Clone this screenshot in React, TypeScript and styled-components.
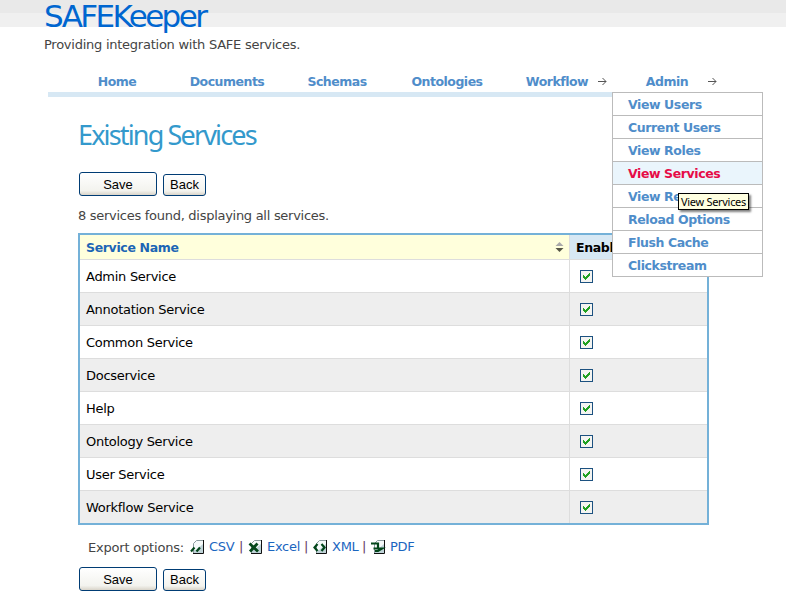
import React from 'react';
import styled, { createGlobalStyle } from 'styled-components';

const GlobalStyle = createGlobalStyle`
  * { box-sizing: border-box; }
  body {
    margin: 0;
    background: #fff;
    font-family: 'DejaVu Sans', sans-serif;
    font-size: 13px;
    letter-spacing: -0.28px;
    color: #444;
    overflow: hidden;
  }
`;

const Page = styled.div`
  height: 591px;
  background: linear-gradient(#e9e9e9 0 13px, #f0f0f0 13px 27px, #fff 27px);
  overflow: hidden;
`;
const Header = styled.header`
  padding-left: 44px;
  height: 70px;
  white-space: nowrap;
`;
const Logo = styled.div`
  height: 36px;
  font-size: 31px;
  line-height: 32px;
  letter-spacing: -2.6px;
  color: #0066d0;
`;
const Tagline = styled.div`
  line-height: 18px;
  letter-spacing: -0.25px;
`;
const Nav = styled.nav`
  display: grid;
  grid-template-columns: repeat(6, 110px);
  width: 714px;
  height: 27px;
  margin-left: 48px;
  padding-left: 14px;
  border-bottom: 5px solid #d7e8f4;
`;
const NavItem = styled.div`
  position: relative;
  text-align: center;
  line-height: 23px;
  font-size: 12.5px;
  font-weight: bold;
  letter-spacing: -0.5px;
  color: #4f8dca;
`;
const NavArrow = styled.svg`
  position: absolute;
  right: 5px;
  top: 8px;
`;
const Menu = styled.div`
  position: absolute;
  z-index: 2;
  left: 0;
  top: 22px;
  width: 151px;
  background: #fff;
  border: 1px solid #bbb;
  text-align: left;
  letter-spacing: -0.4px;
`;
const MenuItem = styled.div<{ $active?: boolean }>`
  height: 23px;
  line-height: 23px;
  padding-left: 15px;
  background: ${(p) => (p.$active ? '#eaf5fc' : '#fff')};
  color: ${(p) => (p.$active ? '#e60c48' : '#4f8dca')};
  border-bottom: 1px solid #bbb;
  &:last-of-type { height: 22px; border-bottom: 0; }
`;
const Tooltip = styled.span`
  position: absolute;
  left: 65px;
  top: 100px;
  width: 71px;
  height: 17px;
  padding-left: 2px;
  border: 1px solid #000;
  background: #ffffe1;
  color: #000;
  font: 11px/16px 'Noto Sans', sans-serif;
  letter-spacing: -0.3px;
  box-shadow: 2px 2px 2px rgba(0, 0, 0, 0.5);
  white-space: nowrap;
`;
const Content = styled.main`
  width: 631px;
  margin-left: 78px;
`;
const Title = styled.h1`
  margin: 0;
  padding-top: 21px;
  height: 75px;
  font-family: 'Noto Sans', sans-serif;
  font-size: 27px;
  font-weight: normal;
  line-height: 34px;
  letter-spacing: -1.85px;
  color: #3399cc;
  white-space: nowrap;
`;
const Buttons = styled.div`
  display: flex;
  align-items: flex-end;
  gap: 6px;
  padding-left: 1px;
  height: 24px;
`;
const Button = styled.button<{ $wide?: boolean }>`
  width: ${(p) => (p.$wide ? 78 : 43)}px;
  height: ${(p) => (p.$wide ? 24 : 22)}px;
  padding: ${(p) => (p.$wide ? '2px 0 0' : '0 0 1px')};
  border: 1px solid #003c74;
  border-radius: 3px;
  background: linear-gradient(#fff, #f3f3ee 80%, #d9d4c9);
  color: #000;
  font: 13px/18px 'Liberation Sans', sans-serif;
`;
const Summary = styled.div`
  height: 37px;
  padding-top: 12px;
  line-height: 16px;
`;
const Table = styled.div`
  border: 2px solid #74b1d8;
  color: #000;
`;
const Row = styled.div<{ $shaded?: boolean }>`
  display: grid;
  grid-template-columns: 490px 1fr;
  grid-template-rows: 100%;
  height: 33px;
  line-height: 34px;
  background: ${(p) => (p.$shaded ? '#eee' : '#fff')};
  border-bottom: 1px solid #ddd;
  &:last-child { height: 32px; border-bottom: 0; }
`;
const HeadRow = styled(Row)`
  height: 25px;
  line-height: 25px;
  font-size: 12.5px;
  font-weight: bold;
  letter-spacing: -0.35px;
`;
const Cell = styled.div`
  padding-left: 6px;
  border-right: 1px solid #ddd;
`;
const SortCell = styled(Cell)`
  display: flex;
  align-items: center;
  justify-content: space-between;
  padding-right: 5px;
  background: #ffffdc;
  color: #1c65b5;
`;
const EnabledHead = styled.div`
  padding-left: 6px;
  background: #d7e8f4;
`;
const CheckCell = styled.div`
  display: flex;
  align-items: center;
  padding-left: 10px;
`;
const Export = styled.div`
  display: flex;
  height: 42px;
  padding: 13px 0 0 10px;
  line-height: 18px;
  white-space: nowrap;
`;
const ExportLabel = styled.span`
  width: 102px;
  padding-top: 1px;
  letter-spacing: -0.2px;
`;
const ExportLink = styled.span<{ $width: number }>`
  display: flex;
  width: ${(p) => p.$width}px;
  color: #1b66bf;
  svg { margin: 2px 4px 0 0; }
`;
const Divider = styled.span`
  width: 9px;
  color: #653b63;
`;

const Arrow = () => (
  <NavArrow width="9" height="7" viewBox="0 0 9 7" fill="none" stroke="#555">
    <path d="M0 3.5h8M4.5 0l3.5 3.5L4.5 7" />
  </NavArrow>
);

const SortIcon = () => (
  <svg width="9" height="10" viewBox="0 0 9 10">
    <path d="M.5 4L4.5 0l4 4z" fill="#aaa" />
    <path d="M.5 6h8l-4 4z" fill="#554" />
  </svg>
);

const Check = () => (
  <svg width="13" height="13" viewBox="0 0 13 13" shapeRendering="crispEdges">
    <rect x=".5" y=".5" width="12" height="12" fill="#f4f4f1" stroke="#1c5180" />
    <path d="M3 5h1v1h1v1h1V6h1V5h1V4h1V3h1v3H9v1H8v1H7v1H6v1H5V9H4V8H3z" fill="#21a121" />
  </svg>
);

const glyphs: Record<string, string> = {
  CSV: 'M1 11.5L4.5 7.5M6.5 11.5L10 7.5',
  Excel: 'M1.5 3.5L10 11.5M9.5 3.5L2 11.5',
  XML: 'M4.5 4L1.5 7.5l3 3.5M8.5 4l3 3.5-3 3.5',
  PDF: 'M0 3.5h7v5M2.5 8.5h8.5L7 11H4',
};

const FileIcon = ({ kind }: { kind: string }) => (
  <svg width="15" height="14" viewBox="0 0 15 14">
    <path d="M3 4l3-3h8v12H3z" fill="#bfd3d8" />
    <path d="M6 1h7v3L6 10H3V4z" fill="#f6fafa" />
    <path d="M3.5 13V3.5l3-3H13" fill="none" stroke="#8a9a9e" />
    <path d="M13.5 0v13.5H3" fill="none" stroke="#111" />
    <path d={glyphs[kind]} fill="none" stroke="#03461a" strokeWidth={kind === 'Excel' ? 2.8 : 2.2} />
  </svg>
);

const navItems = ['Home', 'Documents', 'Schemas', 'Ontologies', 'Workflow', 'Admin'];
const menuItems = [
  'View Users', 'Current Users', 'View Roles', 'View Services',
  'View Resources', 'Reload Options', 'Flush Cache', 'Clickstream',
];
const services = [
  'Admin Service', 'Annotation Service', 'Common Service', 'Docservice',
  'Help', 'Ontology Service', 'User Service', 'Workflow Service',
];
const exportsList = [
  { kind: 'CSV', width: 49 },
  { kind: 'Excel', width: 56 },
  { kind: 'XML', width: 49 },
  { kind: 'PDF', width: 50 },
];

const Actions = () => (
  <Buttons>
    <Button $wide>Save</Button>
    <Button>Back</Button>
  </Buttons>
);

export default function App() {
  return (
    <Page>
      <GlobalStyle />
      <Header>
        <Logo>SAFEKeeper</Logo>
        <Tagline>Providing integration with SAFE services.</Tagline>
      </Header>
      <Nav>
        {navItems.map((name) => (
          <NavItem key={name}>
            {name}
            {(name === 'Workflow' || name === 'Admin') && <Arrow />}
            {name === 'Admin' && (
              <Menu>
                {menuItems.map((item) => (
                  <MenuItem key={item} $active={item === 'View Services'}>{item}</MenuItem>
                ))}
                <Tooltip>View Services</Tooltip>
              </Menu>
            )}
          </NavItem>
        ))}
      </Nav>
      <Content>
        <Title>Existing Services</Title>
        <Actions />
        <Summary>8 services found, displaying all services.</Summary>
        <Table>
          <HeadRow>
            <SortCell>Service Name<SortIcon /></SortCell>
            <EnabledHead>Enabled</EnabledHead>
          </HeadRow>
          {services.map((service, i) => (
            <Row key={service} $shaded={i % 2 === 1}>
              <Cell>{service}</Cell>
              <CheckCell><Check /></CheckCell>
            </Row>
          ))}
        </Table>
        <Export>
          <ExportLabel>Export options:</ExportLabel>
          {exportsList.map(({ kind, width }, i) => (
            <React.Fragment key={kind}>
              {i > 0 && <Divider>|</Divider>}
              <ExportLink $width={width}><FileIcon kind={kind} />{kind}</ExportLink>
            </React.Fragment>
          ))}
        </Export>
        <Actions />
      </Content>
    </Page>
  );
}
